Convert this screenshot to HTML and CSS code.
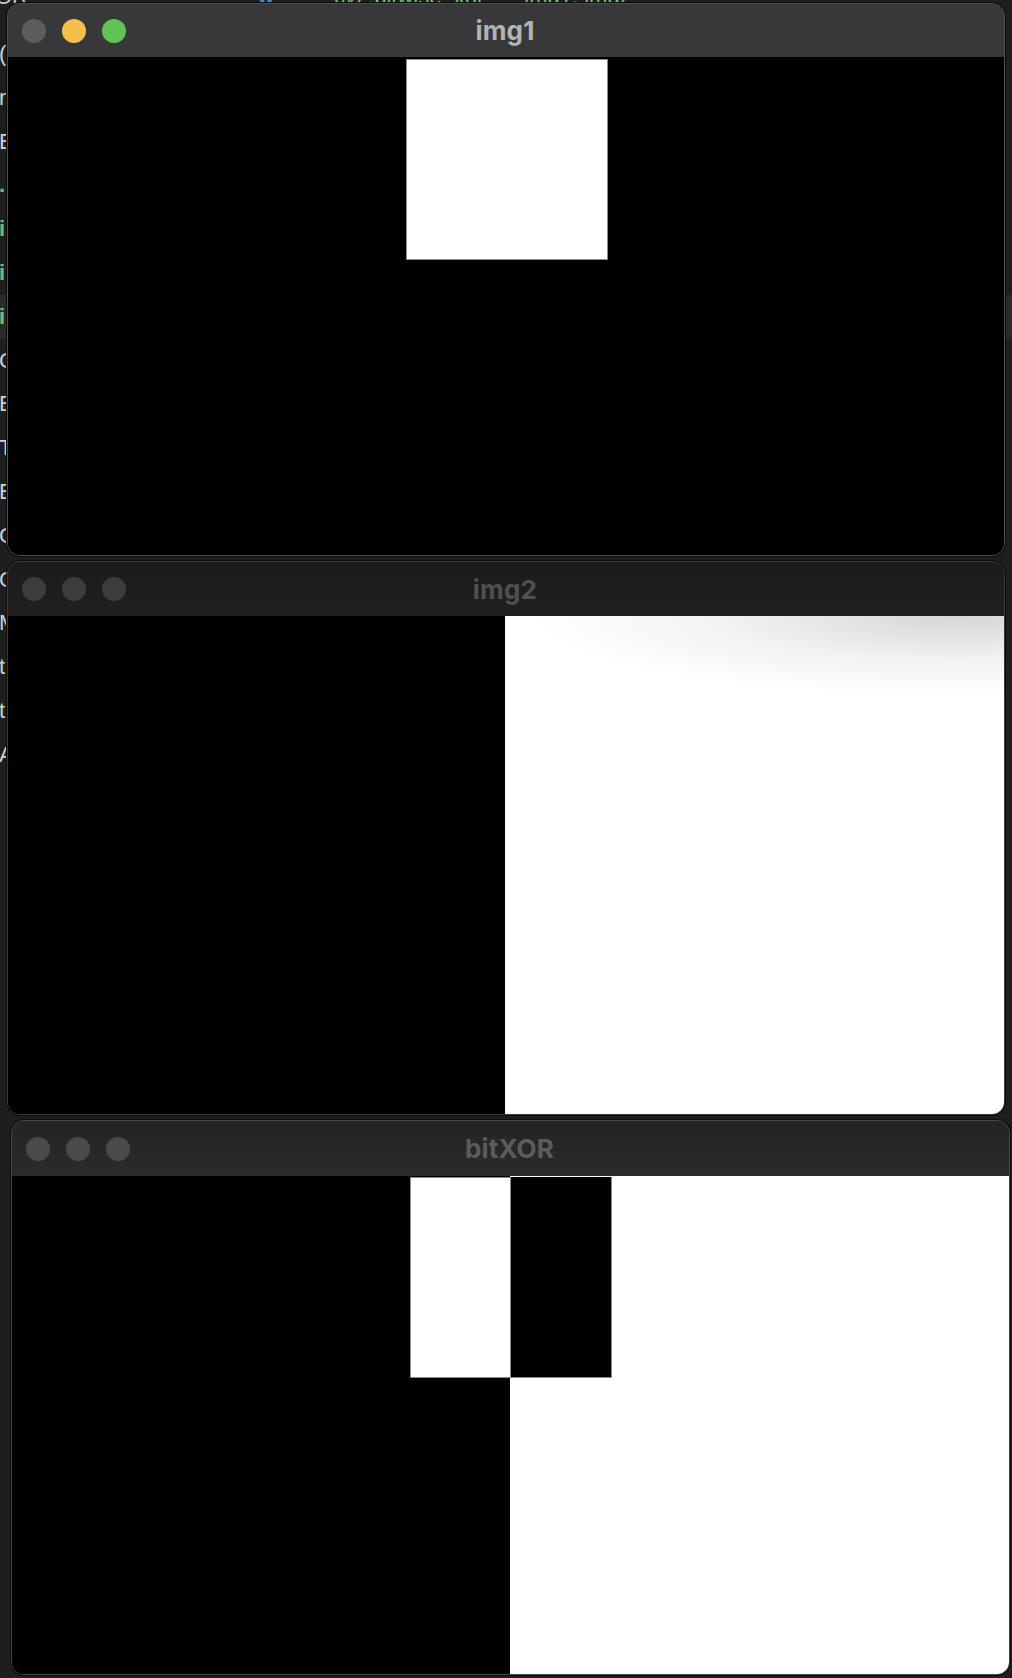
FILE: index.html
```html
<!DOCTYPE html>
<html lang="en">
<head>
<meta charset="utf-8">
<title>img windows</title>
<link rel="stylesheet" href="styles.css">
</head>
<body>
<div class="desktop">
  <div class="editor">
    <div class="topline"><span class="g">OR</span><span class="b gap1">w</span><span class="gr gap2">cv2.bitwise_xor</span><span class="gr gap3">img1, img2</span></div>
    <div class="line">(</div>
    <div class="line">r</div>
    <div class="line">E</div>
    <div class="line gr">.</div>
    <div class="line gr">i</div>
    <div class="line gr">i</div>
    <div class="line gr hl">i</div>
    <div class="line">C</div>
    <div class="line">E</div>
    <div class="line">T</div>
    <div class="line">E</div>
    <div class="line">C</div>
    <div class="line">C</div>
    <div class="line">M</div>
    <div class="line">t</div>
    <div class="line">t</div>
    <div class="line">A</div>
    <div class="bottomline">cv2.waitKey(0) cv2.destroyAllWindows()</div>
  </div>

  <section class="win win-1 active">
    <header class="titlebar">
      <div class="lights">
        <span class="light close"></span>
        <span class="light min"></span>
        <span class="light max"></span>
      </div>
      <h1 class="title">img1</h1>
      <div></div>
    </header>
    <div class="content c1">
      <div class="sq-white sq1"></div>
    </div>
  </section>

  <section class="win win-2">
    <header class="titlebar">
      <div class="lights">
        <span class="light"></span>
        <span class="light"></span>
        <span class="light"></span>
      </div>
      <h1 class="title">img2</h1>
      <div></div>
    </header>
    <div class="content c2">
      <div class="half-black"></div>
      <div class="half-white"></div>
    </div>
  </section>

  <section class="win win-3">
    <header class="titlebar">
      <div class="lights">
        <span class="light"></span>
        <span class="light"></span>
        <span class="light"></span>
      </div>
      <h1 class="title">bitXOR</h1>
      <div></div>
    </header>
    <div class="content c3">
      <div class="col-black">
        <div class="sq-white sq3"></div>
      </div>
      <div class="col-white">
        <div class="sq-black"></div>
      </div>
    </div>
  </section>
</div>
</body>
</html>
```

FILE: styles.css
```css
* { box-sizing: border-box; margin: 0; padding: 0; }

html, body {
  width: 1012px;
  height: 1678px;
  background: #1e1e1e;
  overflow: hidden;
}

body {
  font-family: "Inter", "Liberation Sans", sans-serif;
}

.desktop {
  position: relative;
  width: 1012px;
  height: 1678px;
  overflow: hidden;
}

/* background editor text peeking around windows */
.editor {
  font-family: "Liberation Sans", "DejaVu Sans", sans-serif;
  font-size: 22px;
  color: #cfcfcf;
  margin-left: -1px;
}
.topline {
  height: 42px;
  line-height: 14px;
  margin-top: -10px;
  margin-left: -4px;
  white-space: nowrap;
  color: #c9c9c9;
}
.topline .b { color: #4fa6e0; }
.topline .gr { color: #7bbf7b; }
.gap1 { margin-left: 230px; }
.gap2 { margin-left: 60px; }
.gap3 { margin-left: 40px; }
.line {
  height: 43.8px;
  line-height: 43.8px;
}
.line.gr { color: #78b878; font-weight: 700; }
.line.hl { background: #2a2a2a; }
.bottomline {
  margin-top: 850px;
  margin-left: 290px;
  color: #bdbdbd;
  white-space: nowrap;
  letter-spacing: 4px;
}

/* windows */
.win {
  position: absolute;
  display: flex;
  flex-direction: column;
  border: 1px solid #4e4e4e;
  border-radius: 13px;
  overflow: hidden;
  box-shadow: 0 0 0 1px #0c0c0c;
}
.win-1 { left: 7px; top: 3px; width: 998px; height: 553px; }
.win-2 { left: 7px; top: 561px; width: 998px; height: 554px; border-color: #3a3a3a; }
.win-3 { left: 11px; top: 1120px; width: 999px; height: 555px; border-color: #494949; }

.titlebar {
  display: grid;
  grid-template-columns: 1fr auto 1fr;
  align-items: center;
  flex: none;
  padding-left: 14px;
}
.win-1 .titlebar { height: 53px; background: #38383a; }
.win-2 .titlebar { height: 54px; background: linear-gradient(#1b1b1b, #202020); }
.win-3 .titlebar { height: 55px; background: linear-gradient(#242424, #2b2b2b); }

.lights {
  display: flex;
  gap: 16px;
}
.light {
  width: 24px;
  height: 24px;
  border-radius: 50%;
}
.win-1 .light.close { background: #5c5c5e; }
.win-1 .light.min { background: #f5bf4f; }
.win-1 .light.max { background: #5fc454; }
.win-2 .light { background: #3c3c3c; }
.win-3 .light { background: #4a4a4a; }

.title {
  font-size: 26px;
  font-weight: 700;
  letter-spacing: 0.2px;
  margin-left: -16px;
}
.win-1 .title { color: #b3b3b3; }
.win-2 .title { color: #505050; }
.win-3 .title { color: #5c5c5c; }

.content {
  flex: 1;
  background: #000;
}

.c1 { padding: 2px 0 0 398px; }

.sq-white {
  background: #fff;
  border: 1px solid #8a8a8a;
}
.sq1 { width: 202px; height: 201px; }

.c2 { display: flex; }
.half-black { width: 497px; background: #000; }
.half-white {
  flex: 1;
  background:
    radial-gradient(ellipse 85% 80px at 90% 0, rgba(0,0,0,0.16), rgba(0,0,0,0.05) 55%, rgba(0,0,0,0)),
    #fff;
}

.c3 { display: flex; }
.col-black {
  width: 498px;
  background: #000;
  padding: 1px 0 0 398px;
}
.sq3 { width: 101px; height: 201px; border-right: none; }
.col-white {
  flex: 1;
  background: #fff;
  padding-top: 1px;
}
.sq-black {
  width: 102px;
  height: 201px;
  background: #000;
  border: 1px solid #8a8a8a;
  border-top: none;
}
```
